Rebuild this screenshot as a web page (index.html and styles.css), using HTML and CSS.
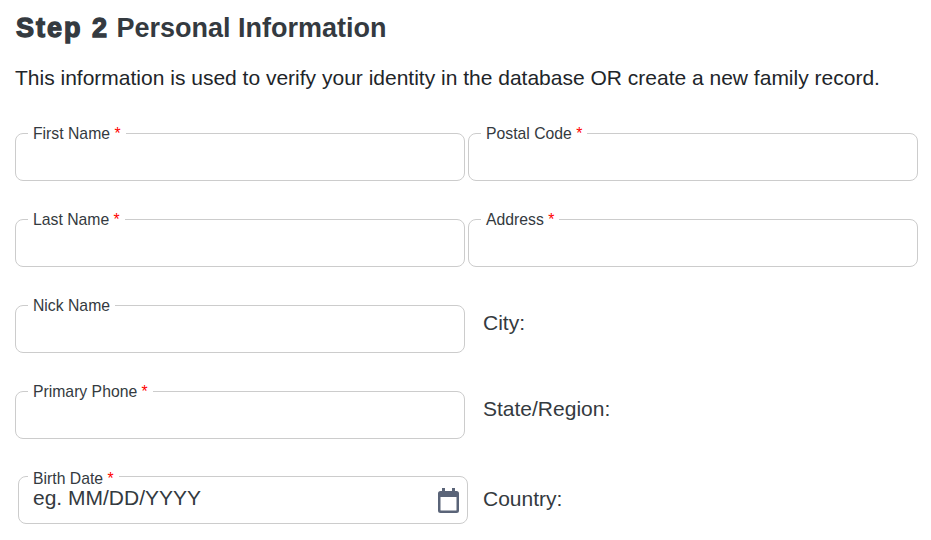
FILE: index.html
```html
<!DOCTYPE html>
<html lang="en">
<head>
<meta charset="utf-8">
<title>Personal Information</title>
<link rel="stylesheet" href="styles.css">
</head>
<body>
<main class="page">
  <h2 class="title"><span class="step">Step 2</span> Personal Information</h2>
  <p class="intro">This information is used to verify your identity in the database OR create a new family record.</p>
  <form class="grid">
    <fieldset class="field"><legend>First Name <b>*</b></legend><input type="text"></fieldset>
    <fieldset class="field"><legend>Postal Code <b>*</b></legend><input type="text"></fieldset>
    <fieldset class="field"><legend>Last Name <b>*</b></legend><input type="text"></fieldset>
    <fieldset class="field"><legend>Address <b>*</b></legend><input type="text"></fieldset>
    <fieldset class="field"><legend>Nick Name</legend><input type="text"></fieldset>
    <div class="static">City:</div>
    <fieldset class="field"><legend>Primary Phone <b>*</b></legend><input type="text"></fieldset>
    <div class="static">State/Region:</div>
    <fieldset class="field date"><legend>Birth Date <b>*</b></legend>
      <input type="text" placeholder="eg. MM/DD/YYYY">
      <svg class="cal" viewBox="0 0 21 25" width="21" height="25" aria-hidden="true"><path fill="#5a6478" d="M4 0h3v3h7V0h3v3h1.500A2.500 2.500 0 0 1 21 5.500v17a2.500 2.500 0 0 1-2.500 2.500h-16A2.500 2.500 0 0 1 0 22.500v-17A2.500 2.500 0 0 1 2.500 3H4zM2.500 9v13a.5.5 0 0 0 .5.5h15a.5.5 0 0 0 .5-.5V9z"/></svg>
    </fieldset>
    <div class="static country">Country:</div>
  </form>
</main>
</body>
</html>
```
FILE: styles.css
```css
* { box-sizing: border-box; }
html, body { margin: 0; background: #fff; }
body { font-family: "Liberation Sans", Arial, sans-serif; color: #343a40; overflow: hidden; }
.page { width: 931px; height: 540px; padding: 12px 13px 0 15px; }
.title { margin: 0; font-size: 27px; line-height: 33px; font-weight: 700; color: #343a40; }
.step { -webkit-text-stroke: 1.3px #343a40; letter-spacing: 2px; margin-left: 1px; }
.intro { margin: 18px 0 0; font-size: 21px; line-height: 30px; color: #212529; }
.grid { display: grid; grid-template-columns: 450px 450px; column-gap: 3px; row-gap: 38px; margin-top: 40px; }
.field { position: relative; margin: -8px 0 0; padding: 0 12px; height: 56px; border: 1px solid #ccc; border-radius: 8px; min-width: 0; }
.field legend { padding: 2px 5px 0; font-size: 15.75px; line-height: 14px; color: #343a40; white-space: nowrap; }
.field legend b { font-weight: 400; color: #f00; }
.field input { display: block; width: calc(100% - 10px); height: 30px; margin: -1px 5px 0; border: 0; outline: 0; padding: 0; background: none; font: 21px "Liberation Sans", Arial, sans-serif; color: #343a40; }
.field input::placeholder { color: #343a40; opacity: 1; }
.date { margin: -11px -3px 0 3px; padding: 0 9px; height: 58px; }
.date legend { padding-top: 6px; }
.date input { width: calc(100% - 40px); margin-top: -3px; }
.cal { position: absolute; right: 8px; top: 2px; }
.static { display: flex; align-items: center; height: 36px; padding-left: 15px; font-size: 21px; color: #343a40; }
.country { height: 46px; margin-top: -1px; }
```
